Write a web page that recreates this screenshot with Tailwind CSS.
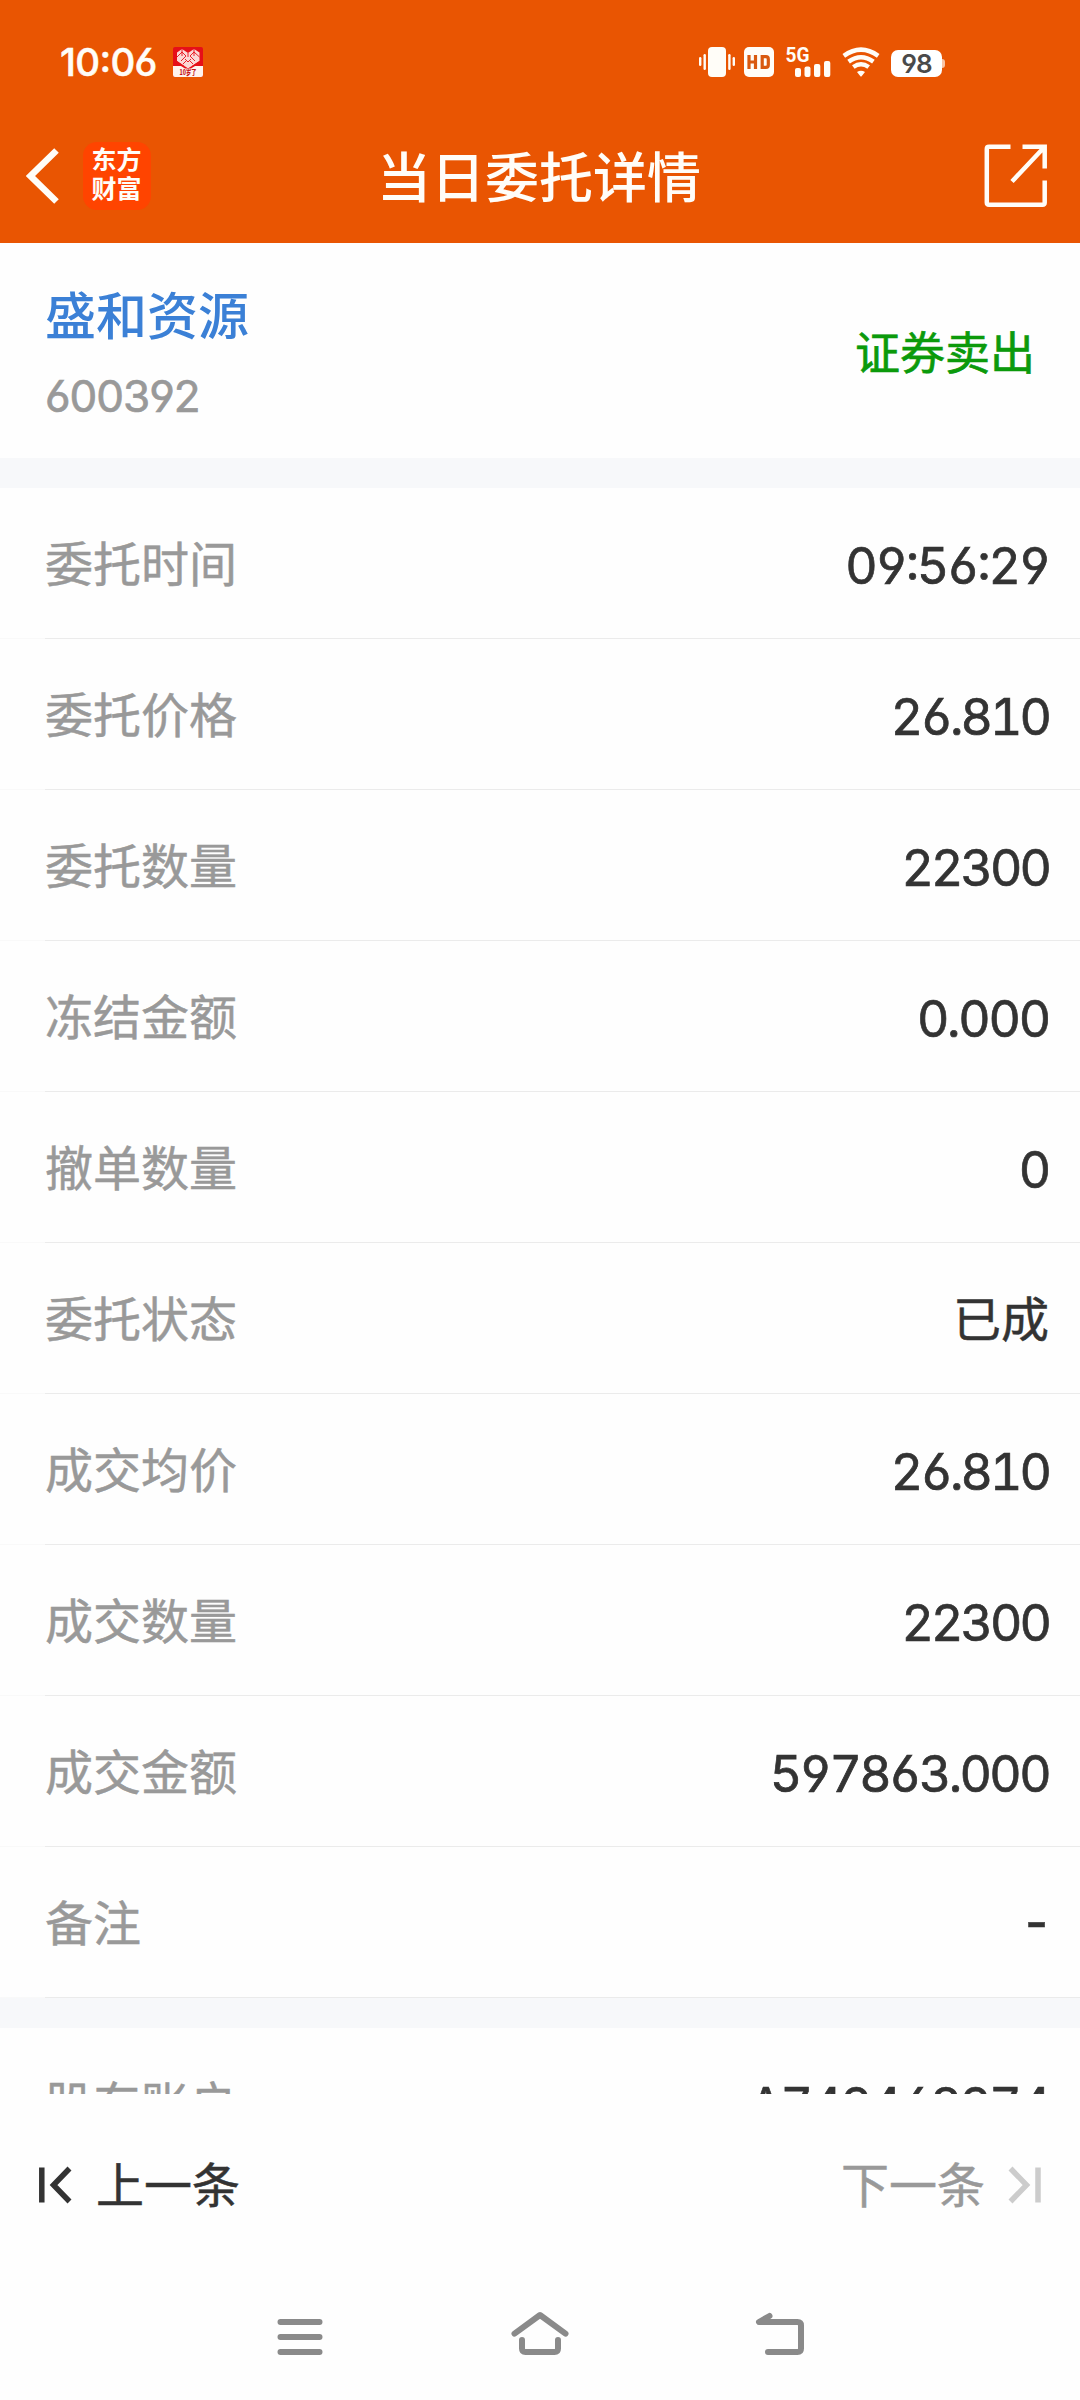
<!DOCTYPE html>
<html lang="zh-CN">
<head>
<meta charset="utf-8">
<title>当日委托详情</title>
<script src="https://cdn.jsdelivr.net/npm/@tailwindcss/browser@4"></script>
</head>
<body class="flex h-[2400px] w-[1080px] flex-col overflow-hidden bg-[#fefefe] font-['Inter','Noto_Sans_CJK_SC',sans-serif] text-[#333333] [-webkit-text-stroke:0.5px] [font-feature-settings:'cv03','cv04','calt']">
  <header class="h-[243px] shrink-0 bg-[#e95502] text-[#fffdf8]">
    <div class="flex h-[124px] items-center pl-[60px] pr-[134px]">
      <span class="w-[98px] text-[38.500px] leading-none font-medium tracking-[-0.700px]">10:06</span>
      <svg class="ml-[15px] [-webkit-text-stroke:0px]" width="30" height="30" viewBox="0 0 30 30">
        <rect width="30" height="30" rx="2" fill="#e60f18"/>
        <path d="M0 19 L12 19 L15 22 L18 19 L30 19 V28 Q30 30 28 30 H2 Q0 30 0 28Z" fill="#fff3ee"/>
        <path d="M15 21.500 L4 14 V5.500 L9 2 L15 6 L21 2 L26.500 5.500 V14Z" fill="#fbd9d6"/>
        <path d="M4 10 L9 5 L13 9 L8 14 M26.500 10 L21 5 L17 9 L22 14 M9 2V9 M21 2V9 M12 12 L15 15 L18 12 M15 6V10 M10 17 L13 14 M20 17 L17 14" fill="none" stroke="#e60f18" stroke-width="0.900"/>
        <path d="M0 13 L4 14 L15 21.500 L12 21.500 L8 19 H0Z M30 13 L26.500 14 L15 21.500 L18 21.500 L22 19 H30Z" fill="#e60f18"/>
        <text x="15" y="28" text-anchor="middle" font-size="7" font-weight="900" fill="#c4161c" font-family="Noto Sans CJK SC" textLength="17" lengthAdjust="spacingAndGlyphs">10岁了</text>
      </svg>
      <div class="ml-auto flex items-center [-webkit-text-stroke:0px]">
        <svg width="36" height="30" viewBox="0 0 36 30" fill="currentColor">
          <rect x="9" y="0" width="18" height="30" rx="4"/>
          <rect x="0" y="10" width="2.400" height="9" rx="1.200"/><rect x="4.500" y="7" width="2.400" height="16" rx="1.200"/>
          <rect x="29.200" y="7" width="2.400" height="16" rx="1.200"/><rect x="33.600" y="10" width="2.400" height="9" rx="1.200"/>
        </svg>
        <svg class="ml-[9px]" width="30" height="30" viewBox="0 0 30 30">
          <rect width="30" height="30" rx="5" fill="currentColor"/>
          <path d="M5 8V22 M11.500 8V22 M5 15H11.500 M18.200 22V9.700 H22 Q24.300 9.700 24.300 12 V18 Q24.300 20.300 22 20.300 H18.200" fill="none" stroke="#d9590f" stroke-width="3.200"/>
        </svg>
        <svg class="ml-[12px] overflow-visible" width="45" height="30" viewBox="0 0 45 30" fill="currentColor">
          <text x="-0.500" y="14.500" font-size="19.500" font-weight="700" font-family="Roboto" textLength="24" lengthAdjust="spacingAndGlyphs">5G</text>
          <rect x="9" y="21" width="6" height="9" rx="2"/><rect x="18.500" y="19.500" width="6" height="10.500" rx="2"/>
          <rect x="28" y="17" width="6.300" height="13" rx="2"/><rect x="38" y="14" width="6.300" height="16" rx="2"/>
        </svg>
        <svg class="ml-[11px]" width="38" height="30" viewBox="0 0 38 30" fill="none" stroke="currentColor" stroke-width="4.500">
          <path d="M1.800 8.800 Q19 -3.500 36.200 8.800"/>
          <path d="M6.600 14.600 Q19 5.800 31.400 14.600"/>
          <path d="M11.300 20 Q19 14.600 26.700 20"/>
          <path d="M15 25 Q19 22.500 23 25 L19.800 29 Q19 30 18.200 29Z" fill="currentColor" stroke="none"/>
        </svg>
        <div class="mt-[3px] ml-[11px] flex h-[27px] w-[51px] items-center justify-center rounded-[7px] bg-white text-[26px] leading-none font-semibold tracking-[-1px] text-[#4a4a4a]">98</div>
        <div class="mt-[3px] mr-px h-[9px] w-[3px] rounded-r-[3px] bg-[#f9c4a6]"></div>
      </div>
    </div>
    <div class="flex h-[103px] items-center pr-[32px] pl-[26px]">
      <svg width="34" height="56" viewBox="0 0 34 56" fill="none" stroke="currentColor" stroke-width="6.500"><path d="M30.500 2.500 L4.500 28 L30.500 53.500"/></svg>
      <div class="ml-[23px] flex size-[68px] flex-col items-center justify-center rounded-[14px] bg-[#ff4400] pr-px pb-px text-[25px] leading-[29px] font-bold [-webkit-text-stroke:0px]"><span>东方</span><span>财富</span></div>
      <h1 class="mt-[6px] ml-[226px] text-[54px] leading-none font-medium [-webkit-text-stroke:0px]">当日委托详情</h1>
      <svg class="ml-auto" width="64" height="64" viewBox="0 0 64 64" fill="none" stroke="currentColor" stroke-width="4.500">
        <path d="M26.500 2.800 H5 Q2.800 2.800 2.800 5 V58.500 Q2.800 60.700 5 60.700 H58.500 Q60.700 60.700 60.700 58.500 V36.500"/>
        <path d="M38.500 2.800 H60.700 V24.500 M60 3.500 L28 37.500"/>
      </svg>
    </div>
  </header>

  <section class="flex h-[215px] shrink-0 items-center justify-between px-[45px] pt-[6px]">
    <div>
      <div class="text-[51px] leading-[60px] font-medium text-[#3b80d6] [-webkit-text-stroke:0px]">盛和资源</div>
      <div class="mt-[24px] text-[44px] leading-[50px] tracking-[-1px] text-[#999999] [-webkit-text-stroke:0.700px]">600392</div>
    </div>
    <div class="text-[45px] leading-[60px] text-[#0b9a0b] [-webkit-text-stroke:0.700px]">证券卖出</div>
  </section>
  <div class="h-[30px] shrink-0 bg-[#f7f8fa]"></div>

  <main id="rows" class="h-[1606px] shrink-0 overflow-hidden"></main>

  <footer class="flex h-[182px] shrink-0 items-center justify-between px-[38px] text-[48px] leading-none">
    <div class="flex items-center">
      <svg width="35" height="38" viewBox="0 0 35 38" fill="none" stroke="#333333" stroke-width="5.500"><path d="M3.800 1.500V36.500 M31.500 2.500 L15.500 19 L31.500 35.500"/></svg>
      <span class="mt-[2px] ml-[23px]">上一条</span>
    </div>
    <div class="flex items-center text-[#999999]">
      <span class="mt-[2px] mr-[22px]">下一条</span>
      <svg width="35" height="38" viewBox="0 0 35 38" fill="none" stroke="#cccccc" stroke-width="5.500"><path d="M31 1.500V36.500 M3.500 2.500 L19.500 19 L3.500 35.500"/></svg>
    </div>
  </footer>

  <nav class="flex h-[124px] items-center pl-[270px] text-[#8a8a8a]">
    <svg width="60" height="64" viewBox="0 0 60 64" fill="none" stroke="currentColor" stroke-width="6" stroke-linecap="round"><path d="M10.500 16H49.500 M10.500 31H49.500 M10.500 46H49.500"/></svg>
    <svg class="ml-[178px]" width="64" height="64" viewBox="0 0 64 64" fill="none" stroke="currentColor" stroke-width="6" stroke-linecap="round" stroke-linejoin="round"><path d="M6.500 27.700 L32 9 L57.500 27.700 M14 34 V42.500 Q14 46 17.500 46 H46.500 Q50 46 50 42.500 V34"/></svg>
    <svg class="ml-[178px]" width="60" height="64" viewBox="0 0 60 64" fill="none" stroke="currentColor" stroke-width="6" stroke-linecap="round" stroke-linejoin="round"><path d="M19.500 10 L9 16 H47.500 Q51 16 51 19.500 V42.500 Q51 46 47.500 46 H18"/></svg>
  </nav>

<script>
const text = 'mt-[4px] text-[48px]';
const dash = 'text-[50px] tracking-[1px] font-medium';
const number = 'mt-[6px] text-[50px] tabular-nums [-webkit-text-stroke:0.700px]';
const loose = number + ' tracking-[-2.200px]';
const normal = number + ' tracking-[-2.600px]';
const tight = number + ' tracking-[-2.900px]';
const rows = [
  ['委托时间', '09:56:29', loose],
  ['委托价格', '26.810', tight],
  ['委托数量', '22300', tight],
  ['冻结金额', '0.000', loose],
  ['撤单数量', '0', loose],
  ['委托状态', '已成', text],
  ['成交均价', '26.810', tight],
  ['成交数量', '22300', tight],
  ['成交金额', '597863.000', normal],
  ['备注', '-', dash],
];
const row = ([label, value, style]) => `
  <div class="h-[151px]">
    <div class="flex h-[150px] items-center justify-between pr-[31px] pl-[45px]">
      <span class="mt-[4px] text-[48px] leading-[60px] text-[#999999]">${label}</span>
      <span class="leading-[60px] ${style}">${value}</span>
    </div>
    <div class="flex h-px bg-[#f9f9f9]"><div class="ml-[45px] h-px w-[1035px] bg-[#ebebeb]"></div></div>
  </div>`;
document.getElementById('rows').innerHTML = rows.map(row).join('') + '<div class="h-[30px] bg-[#f7f8fa]"></div>' + row(['股东账户', 'A742468274', normal]);
</script>
</body>
</html>
